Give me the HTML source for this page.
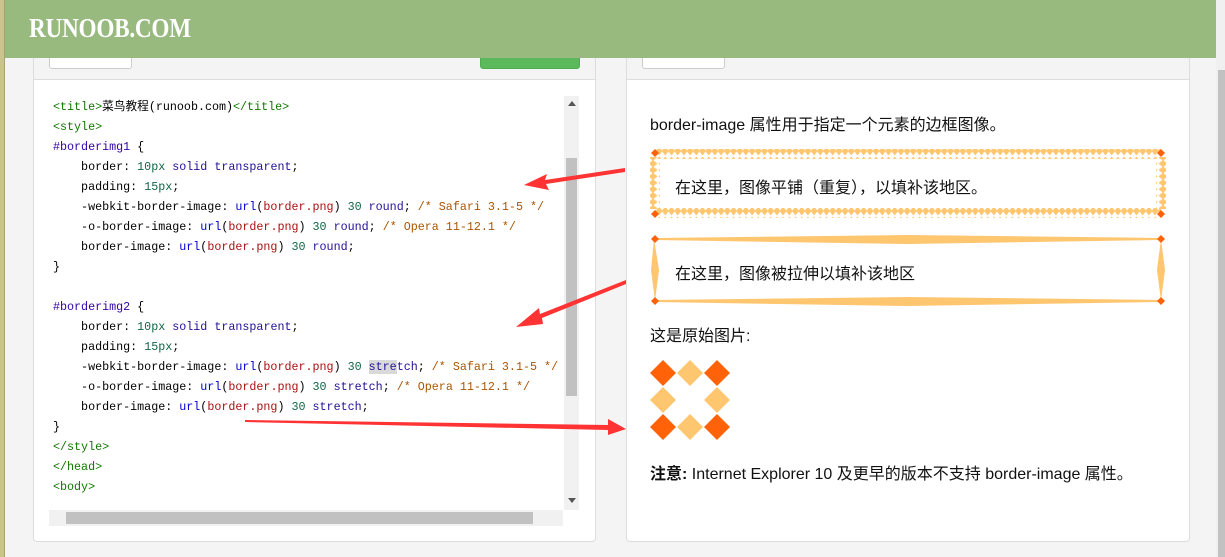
<!DOCTYPE html>
<html><head><meta charset="utf-8"><style>
*{margin:0;padding:0;box-sizing:border-box}
body{width:1225px;height:557px;background:#f4f4f4;position:relative;overflow:hidden;font-family:"Liberation Sans","Noto Sans CJK SC",sans-serif}
.hdr{position:absolute;left:5px;top:0;width:1211px;height:58px;background:#98ba7f}
.lstrip{position:absolute;left:0;top:0;width:5px;height:557px;background:#c9c48d;border-right:1px solid #a7a36c}
.rsb{position:absolute;left:1216px;top:0;width:9px;height:557px;background:#f0f0f0}
.rsb div{position:absolute;left:2px;top:70px;width:7px;height:487px;background:#c1c1c1}
.logo{position:absolute;left:24px;top:13px;color:#fff;font-family:"Liberation Serif",serif;font-weight:bold;font-size:27px;transform:scaleX(0.86);transform-origin:left;letter-spacing:-0.3px}
.panel{position:absolute;top:40px;height:502px;background:#fff;border:1px solid #ddd;border-radius:4px;overflow:hidden}
.ph{position:absolute;left:0;top:0;right:0;height:39px;background:#f4f4f4;border-bottom:1px solid #ddd}
.btn{position:absolute;top:10px;height:18px;background:#fff;border:1px solid #ccc;border-radius:3px}
pre{position:absolute;left:53px;top:97px;font-family:"Liberation Mono","Noto Sans CJK SC",monospace;font-size:11.7px;line-height:20px;color:#000}
.t{color:#170}.k{color:#219}.n{color:#164}.a{color:#00c}.s{color:#a11}.c{color:#a50}.v{color:#30a}
.sel{background:#d9d9d9}
p.tx{position:absolute;left:650px;font-size:16px;color:#111}
</style></head><body>
<div class="lstrip"></div>
<div class="panel" style="left:33px;width:563px">
 <div class="ph"></div>
 <div class="btn" style="left:15px;width:83px"></div>
 <div class="btn" style="left:446px;width:100px;background:#5cb85c;border-color:#4cae4c"></div>
</div>
<div class="panel" style="left:626px;width:564px">
 <div class="ph"></div>
 <div class="btn" style="left:15px;width:83px"></div>
</div>
<div style="position:absolute;left:564px;top:96px;width:15px;height:414px;background:#f1f1f1"></div>
<div style="position:absolute;left:566px;top:158px;width:11px;height:238px;background:#c1c1c1"></div>
<div style="position:absolute;left:568px;top:101px;width:0;height:0;border:4px solid transparent;border-bottom:5px solid #555;border-top:0"></div>
<div style="position:absolute;left:568px;top:498px;width:0;height:0;border:4px solid transparent;border-top:5px solid #555;border-bottom:0"></div>
<div style="position:absolute;left:49px;top:510px;width:514px;height:16px;background:#f1f1f1"></div>
<div style="position:absolute;left:66px;top:512px;width:467px;height:12px;background:#c1c1c1"></div>
<pre><span class="t">&lt;title&gt;</span>菜鸟教程(runoob.com)<span class="t">&lt;/title&gt;</span>
<span class="t">&lt;style&gt;</span>
<span class="v">#borderimg1</span> {
    border: <span class="n">10px</span> <span class="k">solid</span> <span class="k">transparent</span>;
    padding: <span class="n">15px</span>;
    -webkit-border-image: <span class="a">url</span>(<span class="s">border.png</span>) <span class="n">30</span> <span class="k">round</span>; <span class="c">/* Safari 3.1-5 */</span>
    -o-border-image: <span class="a">url</span>(<span class="s">border.png</span>) <span class="n">30</span> <span class="k">round</span>; <span class="c">/* Opera 11-12.1 */</span>
    border-image: <span class="a">url</span>(<span class="s">border.png</span>) <span class="n">30</span> <span class="k">round</span>;
}

<span class="v">#borderimg2</span> {
    border: <span class="n">10px</span> <span class="k">solid</span> <span class="k">transparent</span>;
    padding: <span class="n">15px</span>;
    -webkit-border-image: <span class="a">url</span>(<span class="s">border.png</span>) <span class="n">30</span> <span class="k"><span class="sel">stre</span>tch</span>; <span class="c">/* Safari 3.1-5 */</span>
    -o-border-image: <span class="a">url</span>(<span class="s">border.png</span>) <span class="n">30</span> <span class="k">stretch</span>; <span class="c">/* Opera 11-12.1 */</span>
    border-image: <span class="a">url</span>(<span class="s">border.png</span>) <span class="n">30</span> <span class="k">stretch</span>;
}
<span class="t">&lt;/style&gt;</span>
<span class="t">&lt;/head&gt;</span>
<span class="t">&lt;body&gt;</span></pre>

<p class="tx" style="top:111px">border-image 属性用于指定一个元素的边框图像。</p>
<svg style="position:absolute;left:648px;top:146px" width="520" height="162">
 <defs>
  <pattern id="dh" width="6.2" height="10" patternUnits="userSpaceOnUse" x="8"><polygon points="3.1,0.5 6.6,5 3.1,9.5 -0.4,5" fill="#ffc670"/></pattern>
  <pattern id="dv" width="10" height="6.4" patternUnits="userSpaceOnUse" y="8"><polygon points="5,-0.4 9.5,3.2 5,6.8 0.5,3.2" fill="#ffc670"/></pattern>
 </defs>
 <rect x="7" y="3" width="506" height="10" fill="url(#dh)"/>
 <rect x="7" y="62" width="506" height="10" fill="url(#dh)"/>
 <rect x="2" y="11" width="10" height="52" fill="url(#dv)"/>
 <rect x="508" y="11" width="10" height="52" fill="url(#dv)"/>
 <g fill="#ff6208">
  <polygon points="7,3 11,7 7,11 3,7"/><polygon points="513,3 517,7 513,11 509,7"/>
  <polygon points="7,64 11,68 7,72 3,68"/><polygon points="513,64 517,68 513,72 509,68"/>
 </g>
 <g fill="#ffc670">
  <polygon points="7,92 260,89 513,92 513,94 260,98 7,94"/>
  <polygon points="7,154 260,151 513,154 513,156 260,160 7,156"/>
  <polygon points="6,93 11,124 7,155 3,124"/>
  <polygon points="513,93 517,124 513,155 509,124"/>
 </g>
 <g fill="#ff6208">
  <polygon points="7,89 11,93 7,97 3,93"/><polygon points="513,89 517,93 513,97 509,93"/>
  <polygon points="7,151 11,155 7,159 3,155"/><polygon points="513,151 517,155 513,159 509,155"/>
 </g>
</svg>
<p class="tx" style="top:174px;left:675px">在这里，图像平铺（重复），以填补该地区。</p>
<p class="tx" style="top:260px;left:675px">在这里，图像被拉伸以填补该地区</p>
<p class="tx" style="top:322px">这是原始图片:</p>
<svg style="position:absolute;left:650px;top:360px" width="82" height="82">
 <g fill="#ff6208"><polygon points="13,0 26,13 13,26 0,13"/><polygon points="67,0 80,13 67,26 54,13"/><polygon points="13,54 26,67 13,80 0,67"/><polygon points="67,54 80,67 67,80 54,67"/></g>
 <g fill="#ffc670"><polygon points="40,0 53,13 40,26 27,13"/><polygon points="13,27 26,40 13,53 0,40"/><polygon points="67,27 80,40 67,53 54,40"/><polygon points="40,54 53,67 40,80 27,67"/></g>
</svg>
<p class="tx" style="top:460px"><b>注意:</b> Internet Explorer 10 及更早的版本不支持 border-image 属性。</p>

<svg style="position:absolute;left:0;top:0" width="1225" height="557">
 <g fill="#f33">
  <polygon points="625,168 545,180 547,174 524,185 549,190 546,184 625,172"/>
  <polygon points="626,280 540,314 539,308 516,327 543,324 542,318 626,284"/>
  <polygon points="245,420 608,425 608,419 626,429 608,435 608,430 245,422"/>
 </g>
</svg>
<div class="hdr"><div class="logo">RUNOOB.COM</div></div>
<div class="rsb"><div></div></div>
</body></html>
